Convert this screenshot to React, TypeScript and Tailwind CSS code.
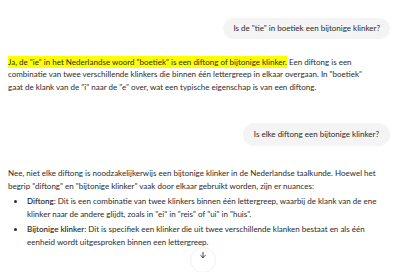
const App = () => {
    return (
        <div className="w-[400px] h-[272px] overflow-hidden bg-white text-[#2b2b2b] text-[8px] leading-[12.6px] relative" style={{ fontFamily: 'Lato, "Open Sans", sans-serif' }}>
            <div className="px-2">
                {/* first question */}
                <div className="flex justify-end pt-[18px] pr-[2px]">
                    <div className="bg-[#f4f4f4] rounded-full px-[10px] py-[4px]">Is de "tie" in boetiek een bijtonige klinker?</div>
                </div>

                {/* answer one */}
                <p className="mt-[17px] pr-[14px]">
                    <span className="bg-[#ffff00] py-[1px]">Ja, de "ie" in het Nederlandse woord "boetiek" is een diftong of bijtonige klinker.</span>{" "}
                    Een diftong is een combinatie van twee verschillende klinkers die binnen één lettergreep in elkaar overgaan. In "boetiek" gaat de klank van de "i" naar de "e" over, wat een typische eigenschap is van een diftong.
                </p>

                {/* second question */}
                <div className="flex justify-end mt-[30px] pr-[2px]">
                    <div className="bg-[#f4f4f4] rounded-full px-[11px] py-[5px]">Is elke diftong een bijtonige klinker?</div>
                </div>

                {/* answer two */}
                <p className="mt-[21px] pr-[10px]">
                    Nee, niet elke diftong is noodzakelijkerwijs een bijtonige klinker in de Nederlandse taalkunde. Hoewel het begrip "diftong" en "bijtonige klinker" vaak door elkaar gebruikt worden, zijn er nuances:
                </p>
                <ul className="mt-[3px] pl-[18px] pr-[10px] list-disc">
                    <li className="pl-[1px]">
                        <b className="font-semibold">Diftong</b>: Dit is een combinatie van twee klinkers binnen één lettergreep, waarbij de klank van de ene klinker naar de andere glijdt, zoals in "ei" in "reis" of "ui" in "huis".
                    </li>
                    <li className="pl-[1px] mt-[3px]">
                        <b className="font-semibold">Bijtonige klinker</b>: Dit is specifiek een klinker die uit twee verschillende klanken bestaat en als één eenheid wordt uitgesproken binnen een lettergreep.
                    </li>
                </ul>
            </div>

            {/* scroll down button */}
            <div className="absolute left-[190px] top-[247px] w-[26px] h-[26px] rounded-full bg-white border border-[#f0f0f0] flex items-start justify-center pt-[3px]">
                <svg width="8" height="8" viewBox="0 0 24 24" fill="none" stroke="#222" strokeWidth="2.5" strokeLinecap="round" strokeLinejoin="round">
                    <path d="M12 4v16" />
                    <path d="M5 13l7 7 7-7" />
                </svg>
            </div>
        </div>
    )
}

export default App;
